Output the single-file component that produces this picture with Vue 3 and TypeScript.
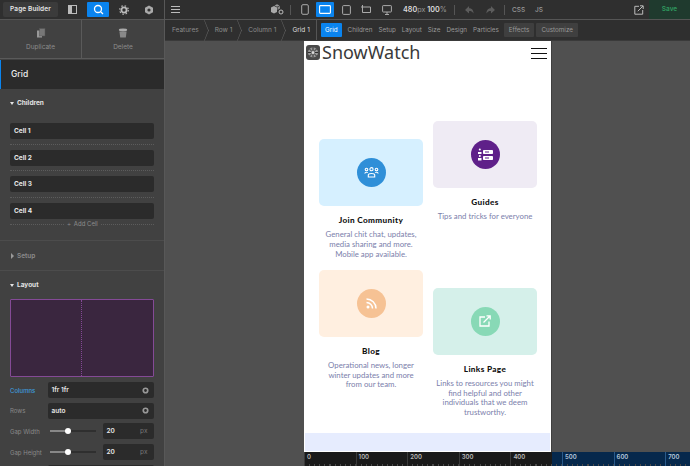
<script setup lang="ts">
const cells: string[] = ['Cell 1', 'Cell 2', 'Cell 3', 'Cell 4']
const crumbs: string[] = ['Features', 'Row 1', 'Column 1', 'Grid 1']
const tabs: string[] = ['Children', 'Setup', 'Layout', 'Size', 'Design', 'Particles']
const marks: number[] = [0, 100, 200, 300, 400, 500, 600, 700]
</script>

<template>
  <div class="app">
    <aside class="side">
      <div class="side-top">
        <div class="brand">Page Builder</div>
        <svg class="ic" width="10" height="10" viewBox="0 0 10 10"><rect x=".5" y=".5" width="8" height="8" fill="none" stroke="#bbb"/><rect x="1" y="1" width="3" height="7" fill="#bbb"/></svg>
        <div class="search"><svg width="11" height="11" viewBox="0 0 11 11"><circle cx="5" cy="5" r="3.5" fill="none" stroke="#fff" stroke-width="1.3"/><path d="M7.6 7.6L10 10" stroke="#fff" stroke-width="1.3"/></svg></div>
        <svg class="ic2" width="10" height="10" viewBox="0 0 10 10"><circle cx="5" cy="5" r="2.6" fill="none" stroke="#bbb" stroke-width="1.8"/><circle cx="5" cy="5" r="4.3" fill="none" stroke="#bbb" stroke-width="1.2" stroke-dasharray="1.5 1.9"/></svg>
        <svg class="ic3" width="10" height="10" viewBox="0 0 10 10"><path d="M5 .5L9 2.8V7.2L5 9.5 1 7.2V2.8Z" fill="#aaa"/><circle cx="5" cy="5" r="1.6" fill="#333"/></svg>
      </div>
      <div class="actions">
        <div class="act">
          <svg width="10" height="10" viewBox="0 0 10 10"><rect x="1" y="2.5" width="5" height="7" fill="#999"/><rect x="3.5" y=".5" width="5.5" height="7.5" fill="#777" stroke="#555" stroke-width=".5"/></svg>
          <span>Duplicate</span>
        </div>
        <div class="act">
          <svg width="10" height="10" viewBox="0 0 10 10"><ellipse cx="5" cy="2" rx="4.2" ry="1.4" fill="#aaa"/><path d="M1.4 3.4H8.6L7.8 9.4H2.2Z" fill="#888"/></svg>
          <span>Delete</span>
        </div>
      </div>
      <div class="title">Grid</div>
      <div class="sec sec-children">
        <div class="sec-h"><i class="down"></i>Children</div>
        <div class="cell-list">
          <div v-for="c in cells" :key="c" class="cell-wrap">
            <div class="cell">{{ c }}</div>
          </div>
        </div>
        <div class="add"><span>＋ Add Cell</span></div>
      </div>
      <div class="sec-closed"><i class="right"></i>Setup</div>
      <div class="sec sec-layout">
        <div class="sec-h"><i class="down"></i>Layout</div>
        <div class="preview"><div class="pv-line"></div></div>
        <div class="frow">
          <label class="active">Columns</label>
          <div class="inp"><span>1fr 1fr</span><svg width="7" height="7" viewBox="0 0 10 10"><circle cx="5" cy="5" r="3.2" fill="none" stroke="#999" stroke-width="2.4"/></svg></div>
        </div>
        <div class="frow">
          <label>Rows</label>
          <div class="inp"><span>auto</span><svg width="7" height="7" viewBox="0 0 10 10"><circle cx="5" cy="5" r="3.2" fill="none" stroke="#999" stroke-width="2.4"/></svg></div>
        </div>
        <div class="frow">
          <label>Gap Width</label>
          <div class="slide"><b></b><u></u></div>
          <div class="num"><span>20</span><em>px</em></div>
        </div>
        <div class="frow">
          <label>Gap Height</label>
          <div class="slide"><b></b><u></u></div>
          <div class="num"><span>20</span><em>px</em></div>
        </div>
        <div class="frow"><label></label><div class="inp"></div></div>
      </div>
    </aside>

    <main class="main">
      <div class="top">
        <div class="burger"><i></i><i></i><i></i></div>
        <div class="top-center">
          <svg class="boxes" width="13" height="11" viewBox="0 0 13 11"><path d="M0 3.500L3 2 6 3.500V8L3 9.500 0 8Z" fill="#aaa"/><path d="M3.500 1.500L6 .3 8.500 1.500 6 2.800Z" fill="#999"/><path d="M6.500 3.300L9 2V4.500L6.500 6Z" fill="#888"/><circle cx="10" cy="8" r="2" fill="#333" stroke="#bbb"/></svg>
          <span class="sep"></span>
          <svg class="dv" width="8" height="11" viewBox="0 0 8 11"><rect x=".7" y=".7" width="6.600" height="9.600" rx="1.200" fill="none" stroke="#aaa"/></svg>
          <div class="dv-on"><svg width="12" height="9" viewBox="0 0 12 9"><rect x=".6" y=".6" width="10.800" height="7.800" rx=".8" fill="none" stroke="#fff" stroke-width="1.100"/></svg></div>
          <svg class="dv2" width="9" height="10" viewBox="0 0 9 10"><rect x=".6" y=".6" width="7.800" height="8.800" rx="1" fill="none" stroke="#aaa"/></svg>
          <svg class="dv3" width="10" height="10" viewBox="0 0 10 10"><path d="M1.500 0V7.500H9.500V2H0" fill="none" stroke="#aaa"/></svg>
          <svg class="dv4" width="10" height="10" viewBox="0 0 10 10"><rect x=".6" y=".6" width="8.800" height="6.400" rx=".6" fill="none" stroke="#aaa"/><path d="M5 7V9.500M3 9.500H7" stroke="#aaa"/></svg>
          <span class="zoom"><b>480</b>px <b class="pct">100</b>%</span>
          <span class="sep s2"></span>
          <svg class="arr" width="9" height="8" viewBox="0 0 10 9"><path d="M0 4.500L4.500 0V2.500C8 2.500 9.500 5 9.500 8.500 8 6 7 5.500 4.500 5.500V8.500Z" fill="#5c5c5c"/></svg>
          <svg class="arr a2" width="9" height="8" viewBox="0 0 10 9"><path d="M10 4.500L5.500 0V2.500C2 2.500 .5 5 .5 8.500 2 6 3 5.500 5.500 5.500V8.500Z" fill="#5c5c5c"/></svg>
          <span class="sep s3"></span>
          <span class="code">CSS</span>
          <span class="code js">JS</span>
        </div>
        <svg class="ext" width="10" height="10" viewBox="0 0 10 10"><path d="M5 1.300H.8V9.200H8.700V5M3.800 6.200L9 1M6 .8H9.200V4" fill="none" stroke="#bbb"/></svg>
        <div class="save">Save</div>
      </div>

      <div class="tabs">
        <div class="crumbs">
          <div v-for="c in crumbs" :key="c" class="crumb">{{ c }}</div>
        </div>
        <div class="tabbar">
          <div class="tab on">Grid</div>
          <div v-for="t in tabs" :key="t" class="tab">{{ t }}</div>
          <div class="tab pill p1">Effects</div>
          <div class="tab pill">Customize</div>
        </div>
      </div>

      <div class="canvas">
        <div class="page">
          <header class="head">
            <div class="logo">
              <svg width="14" height="15" viewBox="0 0 14 15"><rect width="14" height="15" rx="3" fill="#4a4a4a"/><circle cx="7" cy="7.500" r="5" fill="#9a9a9a"/><g stroke="#2f2f2f" stroke-width="1"><path d="M7 2.500V12.500M2 7.500H12M3.500 4L10.500 11M10.500 4L3.500 11"/></g><circle cx="7" cy="7.500" r="1.500" fill="#ddd"/></svg>
              <span>SnowWatch</span>
            </div>
            <div class="menu"><i></i><i></i><i></i></div>
          </header>
          <div class="grid">
            <article class="card a-end">
              <div class="pic blue">
                <div class="dot d-blue">
                  <svg width="15" height="11" viewBox="0 0 15 11"><g fill="none" stroke="#fff" stroke-width="1.100"><circle cx="2.500" cy="2.500" r="1.300"/><circle cx="7.500" cy="2.200" r="1.600"/><circle cx="12.500" cy="2.500" r="1.300"/><path d="M.7 6.500C1.500 5 3 5 3.800 5.600M14.300 6.500C13.500 5 12 5 11.200 5.600M4.300 10V8C4.300 6 10.700 6 10.700 8V10Z"/></g></svg>
                </div>
              </div>
              <h3>Join Community</h3>
              <p>General chit chat, updates, media sharing and more. Mobile app available.</p>
            </article>
            <article class="card a-start">
              <div class="pic violet">
                <div class="dot d-violet">
                  <svg width="15" height="13" viewBox="0 0 15 13"><g fill="#fff"><circle cx="1.800" cy="1.500" r="1"/><path d="M0 6H3.500V4H0Z"/><circle cx="1.800" cy="8" r="1"/><path d="M0 12.500H3.500V10H0Z"/><rect x="5" y="2" width="10" height="4" rx=".8"/><rect x="5" y="8" width="10" height="4" rx=".8"/></g><rect x="7" y="3.500" width="4" height="1" fill="#5f2089"/><rect x="7" y="9.500" width="4" height="1" fill="#5f2089"/></svg>
                </div>
              </div>
              <h3>Guides</h3>
              <p>Tips and tricks for everyone</p>
            </article>
            <article class="card a-start">
              <div class="pic peach">
                <div class="dot d-peach">
                  <svg width="11" height="11" viewBox="0 0 11 11"><circle cx="2" cy="9" r="1.500" fill="#fff"/><path d="M.5 4.500A6 6 0 0 1 6.500 10.500M.5 1A9.500 9.500 0 0 1 10 10.500" fill="none" stroke="#fff" stroke-width="1.500"/></svg>
                </div>
              </div>
              <h3>Blog</h3>
              <p>Operational news, longer winter updates and more from our team.</p>
            </article>
            <article class="card a-end">
              <div class="pic mint">
                <div class="dot d-mint">
                  <svg width="12" height="12" viewBox="0 0 12 12"><path d="M6 2H1V11H10V6.500M4.500 7.500L11 1M7.500 .8H11.200V4.500" fill="none" stroke="#fff" stroke-width="1.300"/></svg>
                </div>
              </div>
              <h3>Links Page</h3>
              <p>Links to resources you might find helpful and other individuals that we deem trustworthy.</p>
            </article>
          </div>
          <div class="strip"></div>
        </div>
        <div class="ruler">
          <div v-for="m in marks" :key="m" class="mark" :class="{ over: m >= 500 }">
            <span>{{ m }}</span>
          </div>
        </div>
      </div>
    </main>
  </div>
</template>

<style>
html, body { margin: 0; background: #505050; }
</style>

<style scoped>
.app { width: 690px; height: 466px; overflow: hidden; display: flex; background: #505050; font-family: Inter, "Liberation Sans", sans-serif; color: #bbb; }
.side { width: 164px; flex: none; height: 466px; overflow: hidden; background: #414141; border-right: 1px solid #585858; box-sizing: content-box; }
.side-top { height: 19px; background: #2f2f2f; border-bottom: 1px solid #555; display: flex; align-items: center; padding-left: 3px; }
.brand { width: 55px; height: 15px; border-radius: 2px; background: #3b3b3b; color: #e4e4e4; font-size: 6.500px; font-weight: 600; line-height: 15px; text-align: center; letter-spacing: .1px; }
.ic { margin-left: 10px; }
.search { margin-left: 9px; width: 22px; height: 15px; border-radius: 1px; background: #0a84ef; display: flex; align-items: center; justify-content: center; }
.ic2 { margin-left: 10px; }
.ic3 { margin-left: 15px; }
.actions { height: 38px; display: flex; border-bottom: 1px solid #5a5a5a; }
.act { flex: 1; display: flex; flex-direction: column; align-items: center; padding-top: 8px; gap: 5px; font-size: 6.500px; color: #8c8c8c; box-sizing: border-box; }
.act:first-child { border-right: 1px solid #5a5a5a; flex: 0 0 82px; }
.title { height: 29px; margin-top: 1px; background: #2b2b2b; border-left: 1px solid #0a84ef; color: #eee; font-size: 8.500px; font-weight: 500; line-height: 28px; padding-left: 10px; }
.sec { padding: 0 10px; }
.sec-children { height: 152px; border-bottom: 1px solid #4c4c4c; box-sizing: border-box; }
.sec-h { height: 28px; font-size: 6.500px; font-weight: 700; color: #e4e4e4; display: flex; align-items: center; gap: 3px; }
.down { width: 0; height: 0; border-left: 2.500px solid transparent; border-right: 2.500px solid transparent; border-top: 3.500px solid #e4e4e4; }
.right { width: 0; height: 0; border-top: 3px solid transparent; border-bottom: 3px solid transparent; border-left: 3.500px solid #999; }
.cell-list { margin-top: 6px; }
.cell-wrap { height: 21.500px; border-bottom: 1px dotted #5c5c5c; box-sizing: border-box; margin-bottom: 5.200px; }
.cell-wrap:last-child { margin-bottom: 0; }
.cell { height: 16px; background: #2b2b2b; border-radius: 2px; font-size: 6.500px; font-weight: 700; color: #e8e8e8; line-height: 16px; padding-left: 4px; }
.add { height: 0; margin-top: -1px; text-align: center; font-size: 6px; color: #8c8c8c; line-height: 0; position: relative; }
.add span { background: #414141; padding: 0 2px; position: relative; top: 0; }
.sec-closed { height: 30px; border-bottom: 1px solid #4c4c4c; box-sizing: border-box; padding-left: 11px; display: flex; align-items: center; gap: 3px; font-size: 6.500px; font-weight: 600; color: #8c8c8c; }
.sec-layout { padding-top: 0; }
.preview { height: 78px; background: #3a263f; border: 1px solid #844a96; border-radius: 1px; box-sizing: border-box; position: relative; margin-bottom: 5px; width: 144px; }
.pv-line { position: absolute; left: 70px; top: 0; bottom: 0; border-left: 1px dotted #844a96; }
.frow { display: flex; align-items: center; height: 16px; margin-bottom: 4.700px; width: 144px; }
.frow label { width: 37.500px; flex: none; font-size: 6px; color: #8a8a8a; }
.frow label.active { color: #3f9ddf; font-weight: 500; }
.inp { flex: 1; height: 16px; background: #2b2b2b; border-radius: 2px; display: flex; align-items: center; justify-content: space-between; padding: 0 5px 0 4px; font-size: 6.500px; font-weight: 600; color: #e8e8e8; box-sizing: border-box; }
.slide { width: 46px; margin-left: 2px; height: 2px; background: #2f2f2f; position: relative; flex: none; }
.slide b { display: block; position: absolute; left: 0; top: 0; width: 18px; height: 2px; background: #888; }
.slide u { position: absolute; left: 15px; top: -2px; width: 6px; height: 6px; border-radius: 50%; background: #fff; }
.num { margin-left: 7px; width: 51px; flex: none; height: 16px; background: #2b2b2b; border-radius: 2px; display: flex; align-items: center; justify-content: space-between; padding: 0 6px 0 4px; box-sizing: border-box; font-size: 6.500px; font-weight: 600; color: #e8e8e8; }
.num em { font-style: normal; font-weight: 400; color: #777; }
.main { flex: 1; min-width: 0; display: flex; flex-direction: column; height: 466px; }
.top { height: 19px; background: #2f2f2f; border-bottom: 1px solid #555; display: flex; align-items: center; flex: none; }
.burger { width: 9px; margin-left: 6px; display: flex; flex-direction: column; gap: 2px; }
.burger i { height: 1px; background: #bbb; display: block; }
.top-center { display: flex; align-items: center; margin-left: 91px; flex: none; }
.sep { width: 1px; height: 10px; background: #555; margin-left: 6px; }
.dv { margin-left: 10px; }
.dv-on { margin-left: 7px; width: 18px; height: 15px; border-radius: 1px; background: #0a84ef; display: flex; align-items: center; justify-content: center; }
.dv2 { margin-left: 8px; }
.dv3 { margin-left: 10px; }
.dv4 { margin-left: 11px; }
.zoom { margin-left: 11px; font-size: 7.200px; color: #999; white-space: nowrap; }
.zoom b { color: #ddd; font-weight: 600; }
.zoom .pct { margin-left: 0; }
.s2 { margin-left: 7px; }
.arr { margin-left: 10px; }
.a2 { margin-left: 12px; }
.s3 { margin-left: 9px; }
.code { margin-left: 7px; font-size: 6.500px; color: #999; font-weight: 500; }
.js { margin-left: 10px; }
.ext { margin-left: auto; }
.save { margin-left: 5px; width: 41px; height: 19px; background: #1f3a2e; color: #2f9a5f; font-size: 6.500px; font-weight: 600; text-align: center; line-height: 18px; }
.tabs { height: 21px; flex: none; background: #2f2f2f; display: flex; align-items: center; border-bottom: 1px solid #3a3a3a; box-sizing: border-box; }
.crumbs { display: flex; height: 20px; align-items: center; width: 152px; flex: none; font-size: 6.500px; color: #8c8c8c; padding-left: 7px; box-sizing: border-box; border-right: 1px solid #555; }
.crumb { position: relative; padding-right: 16px; white-space: nowrap; line-height: 20px; }
.crumb::after { content: ""; position: absolute; right: 3px; top: 3px; width: 14px; height: 14px; border-top: 1px solid #666; border-right: 1px solid #666; transform: scaleX(.4) rotate(45deg); }
.crumb:last-child { color: #ddd; padding-right: 0; }
.crumb:last-child::after { display: none; }
.tabbar { display: flex; align-items: center; margin-left: 4px; font-size: 6.300px; color: #999; }
.tab { padding: 0 3px; line-height: 14px; height: 14px; white-space: nowrap; border-radius: 1px; }
.tab.on { background: #0a84ef; color: #fff; padding: 0 4px; margin-right: 3px; }
.tab.pill { background: #3f3f3f; margin-left: 2px; padding: 0 5px; }
.p1 { margin-left: 5px; }
.canvas { flex: 1; min-height: 0; position: relative; overflow: hidden; padding-left: 139px; display: flex; flex-direction: column; background: #505050; }
.page { width: 248px; flex: none; height: 411px; background: #fff; border-right: 1px solid #3f3f3f; box-sizing: border-box; display: flex; flex-direction: column; font-family: Lato, sans-serif; }
.head { height: 24px; display: flex; align-items: center; justify-content: space-between; padding: 0 4px 0 2px; box-sizing: border-box; flex: none; }
.logo { display: flex; align-items: center; gap: 2px; font-family: "Noto Sans", sans-serif; font-size: 18px; color: #3a3a3a; line-height: 1.300; }
.menu { width: 16px; display: flex; flex-direction: column; gap: 4px; }
.menu i { height: 1px; background: #111; display: block; }
.grid { display: grid; grid-template-columns: 104px 104px; grid-template-rows: 139.400px 149px; column-gap: 10px; row-gap: 9.600px; padding: 56px 0 0 15px; flex: none; }
.card { text-align: center; }
.a-end { align-self: end; }
.a-start { align-self: start; }
.pic { height: 67px; border-radius: 5px; display: flex; align-items: center; justify-content: center; }
.blue { background: #d6f0ff; }
.violet { background: #efebf4; }
.peach { background: #ffefe0; }
.mint { background: #d5f0ea; }
.dot { width: 29px; height: 29px; border-radius: 50%; display: flex; align-items: center; justify-content: center; }
.d-blue { background: #2f8fd8; }
.d-violet { background: #5f2089; }
.d-peach { background: #f6c294; }
.d-mint { background: #88d9b6; }
h3 { margin: 9px 0 0; font-size: 8.200px; line-height: 11px; font-weight: 900; color: #111; letter-spacing: .35px; font-family: Lato, sans-serif; }
p { margin: 4px auto 0; width: 99px; font-size: 7.800px; line-height: 9.700px; color: #7b80ab; font-family: Lato, sans-serif; padding-bottom: 1.200px; }
.strip { margin-top: 14.500px; height: 18px; margin-left: 1px; width: 245px; background: #e6ecfe; flex: none; }
.ruler { height: 14px; flex: none; width: 386px; display: flex; background: linear-gradient(90deg, #1a1a1a 248px, #06284c 248px); }
.mark { width: 51.600px; flex: none; box-sizing: border-box; height: 14px; border-left: 1px solid #3a3a3a; font-size: 6px; font-weight: 600; color: #bbb; padding-left: 2px; line-height: 10px; background: repeating-linear-gradient(90deg, transparent 0 4.060px, #4a4a4a 4.060px 5.160px) bottom / 100% 2px no-repeat; }
.mark.over { color: #b8c8dc; border-left-color: #2a5a8a; }
</style>
